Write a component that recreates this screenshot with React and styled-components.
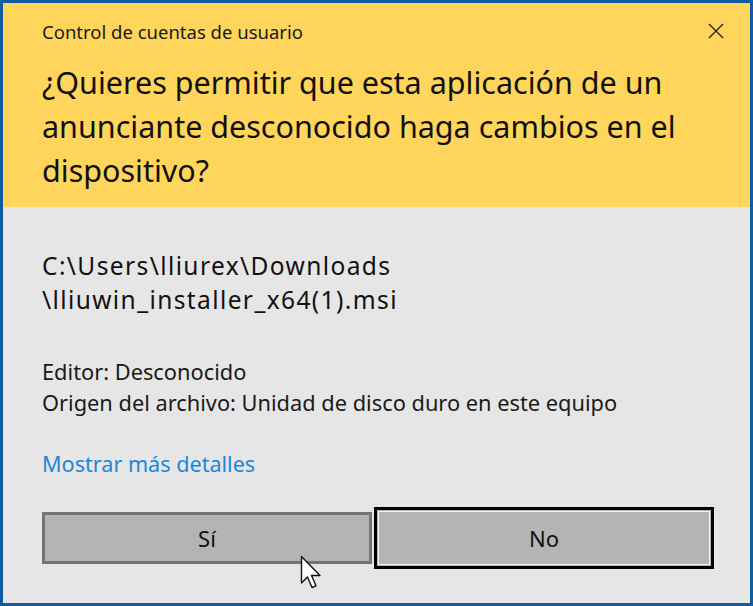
import React from "react";
import styled, { createGlobalStyle } from "styled-components";

const GlobalStyle = createGlobalStyle`
  html, body {
    margin: 0;
    padding: 0;
    background: #e6e6e6;
  }
  body {
    font-family: "Noto Sans", "Open Sans", sans-serif;
  }
`;

const Window = styled.div`
  position: relative;
  width: 753px;
  height: 606px;
  box-sizing: border-box;
  border: 3px solid #0f5ca3;
  background: #e6e6e6;
  display: flex;
  flex-direction: column;
  overflow: hidden;
`;

const Header = styled.div`
  background: #ffd55b;
  height: 204px;
  box-sizing: border-box;
  padding: 14px 0 0 39px;
`;

const TitleBar = styled.div`
  display: flex;
  align-items: center;
  justify-content: space-between;
  height: 28px;
`;

const Caption = styled.span`
  font-size: 18.5px;
  color: #1a1a1a;
`;

const CloseButton = styled.button`
  width: 46px;
  height: 28px;
  margin-right: 11px;
  border: none;
  background: none;
  padding: 0;
  display: flex;
  align-items: center;
  justify-content: center;
  cursor: pointer;
`;

const Question = styled.h1`
  margin: 15px 0 0;
  font-size: 30.5px;
  font-weight: 400;
  line-height: 44px;
  color: #111;
  width: 690px;
`;

const Body = styled.div`
  flex: 1;
  padding: 42px 0 0 39px;
  display: flex;
  flex-direction: column;
`;

const FilePath = styled.div`
  font-size: 24.5px;
  letter-spacing: 1.4px;
  line-height: 33.5px;
  color: #111;
`;

const Details = styled.div`
  margin-top: 40px;
  font-size: 21.8px;
  line-height: 31px;
  color: #1a1a1a;
`;

const MoreLink = styled.a`
  margin-top: 31px;
  font-size: 21.6px;
  color: #1e86d8;
  text-decoration: none;
  cursor: pointer;
`;

const Buttons = styled.div`
  margin-top: 34px;
  display: flex;
  gap: 2px;
`;

const Button = styled.button`
  width: 330px;
  height: 52px;
  box-sizing: border-box;
  background: #b4b4b4;
  border: 3px solid ${(p) => (p.focused ? "#000" : "#747474")};
  outline: ${(p) => (p.focused ? "1px solid #f4f4f4" : "none")};
  outline-offset: -5px;
  font-family: inherit;
  font-size: 22px;
  color: #111;
  cursor: pointer;
  ${(p) => p.focused && "width: 340px; height: 62px; margin-top: -5px;"}
`;

const Cursor = styled.svg`
  position: absolute;
  left: 297px;
  top: 552px;
`;

export default function App() {
  return (
    <>
      <GlobalStyle />
      <Window>
        <Header>
          <TitleBar>
            <Caption>Control de cuentas de usuario</Caption>
            <CloseButton aria-label="Cerrar">
              <svg width="16" height="16" viewBox="0 0 16 16">
                <path d="M1 1 L15 15 M15 1 L1 15" stroke="#222" strokeWidth="1.4" />
              </svg>
            </CloseButton>
          </TitleBar>
          <Question>
            ¿Quieres permitir que esta aplicación de un anunciante desconocido haga cambios en el dispositivo?
          </Question>
        </Header>
        <Body>
          <FilePath>
            C:\Users\lliurex\Downloads
            <br />
            \lliuwin_installer_x64(1).msi
          </FilePath>
          <Details>
            Editor: Desconocido
            <br />
            Origen del archivo: Unidad de disco duro en este equipo
          </Details>
          <MoreLink>Mostrar más detalles</MoreLink>
          <Buttons>
            <Button>Sí</Button>
            <Button focused>No</Button>
          </Buttons>
        </Body>
        <Cursor width="22" height="36" viewBox="0 0 22 36">
          <path
            d="M1.5 1.5 L1.5 28 L7.5 22 L12 32.5 L16 30.8 L11.5 20.5 L20 20.5 Z"
            fill="#fff"
            stroke="#111"
            strokeWidth="1.4"
            strokeLinejoin="round"
          />
        </Cursor>
      </Window>
    </>
  );
}
